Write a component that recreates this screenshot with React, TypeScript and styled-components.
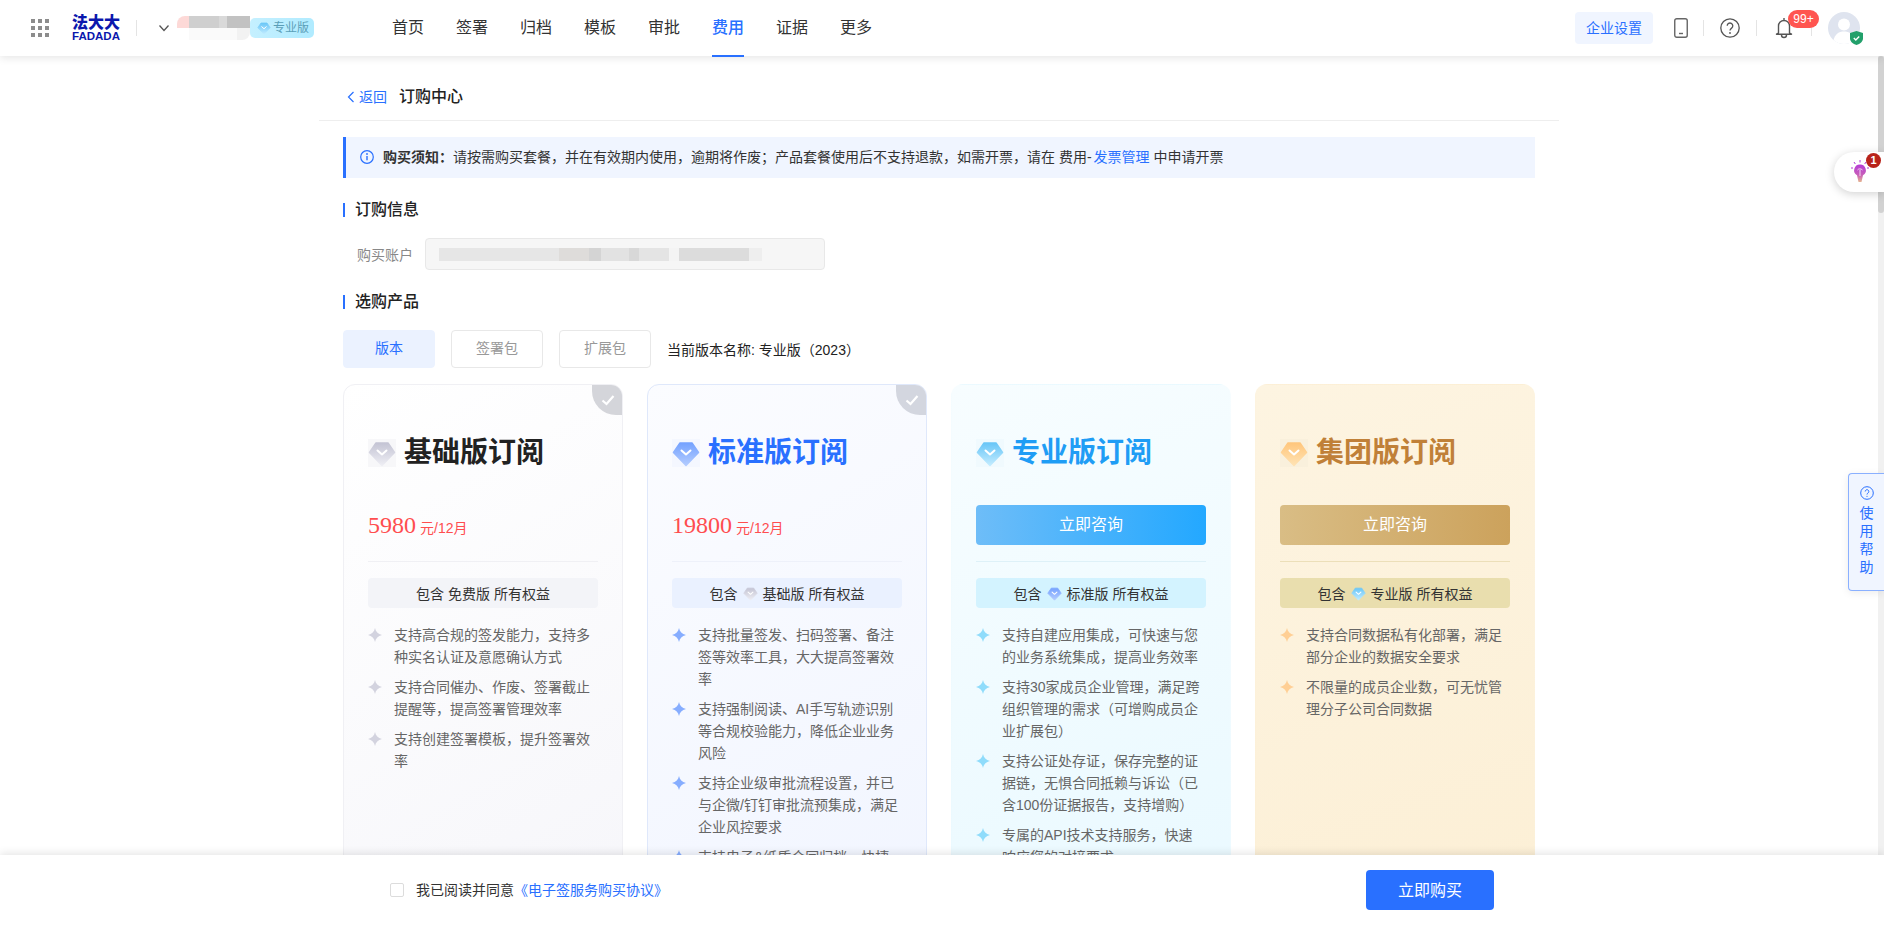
import React from 'react'
import styled, { createGlobalStyle } from 'styled-components'

const BLUE = '#2970ff'

type Tone = 'basic' | 'standard' | 'pro' | 'group'

const tones: Record<Tone, { title: string; bg: string; border: string; pill: string; rule: string; gemTop: string; gemBottom: string; gemBack: string; star: string; mark?: string; btn?: string }> = {
  basic: {
    title: '#222222',
    bg: 'linear-gradient(150deg, #ffffff 0%, #f6f6fa 100%)',
    border: '#f0f0f4',
    pill: '#f3f4f8',
    rule: '#f0f0f4',
    gemTop: '#c4c4d4',
    gemBottom: '#eeeef4',
    gemBack: '#f7f7f9',
    star: '#d3d3df',
    mark: '#d4d5da',
  },
  standard: {
    title: BLUE,
    bg: 'linear-gradient(150deg, #fbfcff 0%, #f1f5ff 100%)',
    border: '#dfe8fb',
    pill: '#eaf1ff',
    rule: '#eef1fa',
    gemTop: '#75a2ff',
    gemBottom: '#b3ccff',
    gemBack: '#f4f7ff',
    star: '#86adff',
    mark: '#d3d6df',
  },
  pro: {
    title: '#1f9df5',
    bg: 'linear-gradient(160deg, #f7fdff 0%, #e9f9ff 100%)',
    border: 'transparent',
    pill: '#d3f3ff',
    rule: '#def1f8',
    gemTop: '#69c6f7',
    gemBottom: '#c3ecff',
    gemBack: '#f0fafe',
    star: '#8fdcfb',
    btn: 'linear-gradient(90deg, #6ebdf8 0%, #23a8ff 100%)',
  },
  group: {
    title: '#c08038',
    bg: 'linear-gradient(160deg, #fdf4e1 0%, #fcefd5 100%)',
    border: 'transparent',
    pill: '#e9deae',
    rule: '#ecdfb9',
    gemTop: '#ffc67c',
    gemBottom: '#ffe3b4',
    gemBack: '#f9f0dc',
    star: '#ffcf94',
    btn: 'linear-gradient(90deg, #d9bd85 0%, #cca25c 100%)',
  },
}

const plans: { tone: Tone; name: string; price?: string; owned?: boolean; includes: string; includesTone?: Tone; items: string[] }[] = [
  {
    tone: 'basic',
    name: '基础版订阅',
    price: '5980',
    owned: true,
    includes: '免费版',
    items: [
      '支持高合规的签发能力\uff0c支持多种实名认证及意愿确认方式',
      '支持合同催办、作废、签署截止提醒等\uff0c提高签署管理效率',
      '支持创建签署模板\uff0c提升签署效率',
    ],
  },
  {
    tone: 'standard',
    name: '标准版订阅',
    price: '19800',
    owned: true,
    includes: '基础版',
    includesTone: 'basic',
    items: [
      '支持批量签发、扫码签署、备注签等效率工具\uff0c大大提高签署效率',
      '支持强制阅读、AI手写轨迹识别等合规校验能力\uff0c降低企业业务风险',
      '支持企业级审批流程设置\uff0c并已与企微/钉钉审批流预集成\uff0c满足企业风控要求',
      '支持电子&纸质合同归档\uff0c快捷管理合同档案',
    ],
  },
  {
    tone: 'pro',
    name: '专业版订阅',
    includes: '标准版',
    includesTone: 'standard',
    items: [
      '支持自建应用集成\uff0c可快速与您的业务系统集成\uff0c提高业务效率',
      '支持30家成员企业管理\uff0c满足跨组织管理的需求\uff08可增购成员企业扩展包\uff09',
      '支持公证处存证\uff0c保存完整的证据链\uff0c无惧合同抵赖与诉讼\uff08已含100份证据报告\uff0c支持增购\uff09',
      '专属的API技术支持服务\uff0c快速响应您的对接要求',
    ],
  },
  {
    tone: 'group',
    name: '集团版订阅',
    includes: '专业版',
    includesTone: 'pro',
    items: [
      '支持合同数据私有化部署\uff0c满足部分企业的数据安全要求',
      '不限量的成员企业数\uff0c可无忧管理分子公司合同数据',
    ],
  },
]

const navItems = ['首页', '签署', '归档', '模板', '审批', '费用', '证据', '更多']

const noticeLead = '购买须知\uff1a'
const noticeBody = '请按需购买套餐\uff0c并在有效期内使用\uff0c逾期将作废\uff1b产品套餐使用后不支持退款\uff0c如需开票\uff0c请在 费用-'
const currentPlan = '当前版本名称: 专业版\uff082023\uff09'

const GlobalStyle = createGlobalStyle`
  html, body {
    margin: 0;
    height: 100%;
    overflow: hidden;
    background: #fff;
    font-family: "Liberation Sans", "Noto Sans CJK SC", sans-serif;
    color: #333;
  }
  * { box-sizing: border-box; }
`

const Page = styled.div`
  position: relative;
  display: flex;
  flex-direction: column;
  height: 100vh;
`

const Header = styled.header`
  position: relative;
  z-index: 3;
  flex: none;
  display: flex;
  align-items: center;
  height: 56px;
  padding: 0 24px 0 31px;
  background: #fff;
  box-shadow: 0 2px 8px rgba(0, 0, 0, 0.1);
`

const AppGrid = styled.div`
  display: grid;
  grid-template-columns: repeat(3, 4px);
  gap: 3px;
  span {
    width: 4px;
    height: 4px;
    background: #8c8c8c;
  }
`

const Logo = styled.div`
  width: 48px;
  margin-left: 23px;
  color: #0b17ad;
  text-align: center;
  font-weight: 700;
  b {
    display: block;
    font-size: 16px;
    line-height: 15px;
  }
  i {
    display: block;
    font-style: normal;
    font-size: 11.5px;
    line-height: 11px;
    margin-top: 1px;
  }
`

const HeadRule = styled.div`
  width: 1px;
  height: 16px;
  margin: 0 16px;
  background: #e4e4e4;
`

const OrgChevron = styled.svg`
  margin-left: 5px;
  margin-right: 7px;
`

const OrgName = styled.div`
  width: 73px;
  height: 24px;
  border-radius: 8px 0 8px 0;
  background:
    linear-gradient(90deg, #fdd9d7 0 12px, #cfcfcf 12px 42px, #d9d9d9 42px 50px, #c2c2c2 50px 100%) top / 100% 12px no-repeat,
    linear-gradient(90deg, #ffffff 0 12px, #fafafa 12px 60px, #f2f2f2 60px 100%) bottom / 100% 12px no-repeat;
`

const PlanBadge = styled.div`
  display: flex;
  align-items: center;
  gap: 2px;
  width: 64px;
  height: 20px;
  padding-left: 7px;
  margin-right: 78px;
  border-radius: 5px;
  background: linear-gradient(90deg, #c5f0ff, #b0ebff);
  color: #5b9fb8;
  font-size: 12px;
  line-height: 20px;
  white-space: nowrap;
`

const Nav = styled.nav`
  display: flex;
  gap: 32px;
`

const NavItem = styled.a<{ $active?: boolean }>`
  position: relative;
  display: block;
  height: 56px;
  font-size: 16px;
  line-height: 55px;
  color: ${(p) => (p.$active ? BLUE : '#333')};
  font-weight: ${(p) => (p.$active ? 500 : 400)};
  &::after {
    content: '';
    display: ${(p) => (p.$active ? 'block' : 'none')};
    position: absolute;
    left: 0;
    right: 0;
    bottom: -1px;
    height: 2px;
    background: ${BLUE};
  }
`

const HeadTools = styled.div`
  display: flex;
  align-items: center;
  margin-left: auto;
`

const SettingsButton = styled.button`
  width: 78px;
  height: 32px;
  padding: 0 0 2px;
  border: 0;
  border-radius: 4px;
  background: #f0f5ff;
  color: ${BLUE};
  font: inherit;
  font-size: 14px;
`

const PhoneIcon = styled.svg`
  display: block;
  margin: 0 -1px 0 21px;
`

const ToolIcon = styled.svg`
  display: block;
  flex: none;
`

const BellSlot = styled.div`
  position: relative;
  width: 20px;
  height: 22px;
  margin-left: 2px;
`

const CountBadge = styled.span`
  position: absolute;
  left: 13px;
  top: -7px;
  width: 31px;
  height: 18px;
  border-radius: 9px;
  background: #ff5550;
  color: #fff;
  font-size: 12px;
  line-height: 18px;
  text-align: center;
`

const Avatar = styled.div`
  position: relative;
  width: 32px;
  height: 32px;
`

const AvatarShield = styled.svg`
  position: absolute;
  right: -3px;
  bottom: -1px;
`

const Body = styled.div`
  flex: 1;
  min-height: 0;
  display: flex;
`

const Scroller = styled.main`
  flex: 1;
  min-width: 0;
  overflow: hidden;
`

const Track = styled.div`
  flex: none;
  width: 6px;
  background: #f1f1f1;
`

const Thumb = styled.div`
  height: 157px;
  border-radius: 3px;
  background: #d2d2d2;
`

const Container = styled.div`
  width: 1240px;
  margin: 0 auto;
`

const Crumbs = styled.div`
  display: flex;
  align-items: center;
  height: 65px;
  padding: 18px 0 0 28px;
  border-bottom: 1px solid #eeeeee;
`

const BackLink = styled.a`
  display: flex;
  align-items: center;
  gap: 4px;
  color: ${BLUE};
  font-size: 14px;
  line-height: 22px;
`

const PageTitle = styled.h1`
  margin: 0 0 0 12px;
  font-size: 16px;
  line-height: 24px;
  font-weight: 500;
  color: #222;
`

const Content = styled.div`
  padding: 0 24px;
`

const Notice = styled.div`
  display: flex;
  align-items: center;
  gap: 9px;
  height: 41px;
  margin-top: 16px;
  padding: 0 0 3px 14px;
  border-left: 3px solid ${BLUE};
  background: #f0f5ff;
  font-size: 14px;
  color: #333;
  white-space: pre;
  svg {
    margin-top: 2px;
  }
  b {
    font-weight: 700;
  }
  a {
    margin-left: 2px;
    color: ${BLUE};
  }
`

const SectionTitle = styled.h2<{ $top: number }>`
  display: flex;
  align-items: center;
  gap: 10px;
  height: 22px;
  margin: ${(p) => p.$top}px 0 0;
  font-size: 16px;
  font-weight: 500;
  color: #222;
  &::before {
    content: '';
    width: 2px;
    height: 14px;
    margin-top: 4px;
    background: ${BLUE};
  }
`

const AccountRow = styled.div`
  display: flex;
  align-items: center;
  gap: 12px;
  margin-top: 19px;
  padding-left: 14px;
  font-size: 14px;
  color: #888;
`

const AccountBox = styled.div`
  display: flex;
  align-items: center;
  width: 400px;
  height: 32px;
  padding-left: 13px;
  border: 1px solid #e8e8e8;
  border-radius: 4px;
  background: #f6f6f6;
`

const Smudge = styled.div`
  width: 323px;
  height: 13px;
  background: linear-gradient(
    90deg,
    #e6e6e6 0 120px,
    #dedcda 120px 150px,
    #d4d4d4 150px 162px,
    #e2e2e2 162px 190px,
    #d8d8d8 190px 200px,
    #e4e4e4 200px 230px,
    #f4f4f4 230px 240px,
    #dcdcdc 240px 310px,
    #eeeeee 310px 100%
  );
`

const TabRow = styled.div`
  display: flex;
  align-items: center;
  gap: 16px;
  margin-top: 19px;
  font-size: 14px;
`

const Tab = styled.div<{ $active?: boolean }>`
  width: 92px;
  height: 38px;
  border: 1px solid ${(p) => (p.$active ? '#ebf2ff' : '#e8e8e8')};
  border-radius: 4px;
  background: ${(p) => (p.$active ? '#ebf2ff' : '#fff')};
  color: ${(p) => (p.$active ? BLUE : '#999')};
  line-height: 35px;
  text-align: center;
`

const CurrentPlan = styled.span`
  padding-bottom: 1px;
  color: #222;
`

const Plans = styled.div`
  display: grid;
  grid-template-columns: repeat(4, 280px);
  gap: 24px;
  margin-top: 16px;
`

const Card = styled.section<{ $tone: Tone }>`
  position: relative;
  overflow: hidden;
  padding: 54px 24px 40px;
  border: 1px solid ${(p) => tones[p.$tone].border};
  border-radius: 12px;
  background: ${(p) => tones[p.$tone].bg};
`

const OwnedMark = styled.div<{ $tone: Tone }>`
  position: absolute;
  top: -1px;
  right: -1px;
  display: flex;
  align-items: center;
  justify-content: center;
  width: 31px;
  height: 31px;
  border-bottom-left-radius: 24px;
  background: ${(p) => tones[p.$tone].mark};
`

const CardTitle = styled.h3<{ $tone: Tone }>`
  display: flex;
  align-items: center;
  gap: 8px;
  height: 28px;
  margin: 0;
  font-size: 28px;
  line-height: 28px;
  font-weight: 700;
  color: ${(p) => tones[p.$tone].title};
`

const Slot = styled.div`
  display: flex;
  align-items: center;
  height: 40px;
  margin-top: 38px;
`

const Price = styled.div`
  color: #ff4d4f;
  font-size: 14px;
  display: flex;
  align-items: baseline;
  b {
    margin-right: 4px;
    font-family: "Liberation Serif", serif;
    font-size: 24px;
    font-weight: 400;
  }
`

const ConsultButton = styled.button<{ $tone: Tone }>`
  width: 100%;
  height: 40px;
  padding: 0 0 4px;
  border: 0;
  border-radius: 4px;
  background: ${(p) => tones[p.$tone].btn};
  color: #fff;
  font: inherit;
  font-size: 16px;
`

const CardRule = styled.div<{ $tone: Tone }>`
  height: 1px;
  margin-top: 16px;
  background: ${(p) => tones[p.$tone].rule};
`

const IncludesPill = styled.div<{ $tone: Tone }>`
  display: flex;
  align-items: center;
  justify-content: center;
  height: 30px;
  margin-top: 16px;
  border-radius: 4px;
  background: ${(p) => tones[p.$tone].pill};
  font-size: 14px;
  color: #333;
  white-space: pre;
  svg {
    margin: 0 5px;
  }
`

const FeatureList = styled.ul`
  display: flex;
  flex-direction: column;
  gap: 8px;
  margin: 16px 0 0;
  padding: 0;
  list-style: none;
`

const Feature = styled.li`
  display: flex;
  gap: 12px;
  font-size: 14px;
  line-height: 22px;
  color: #666;
  svg {
    flex: none;
    margin-top: 4px;
  }
`

const Footer = styled.footer`
  position: relative;
  z-index: 2;
  flex: none;
  display: flex;
  align-items: center;
  height: 70px;
  padding: 0 390px;
  background: #fff;
  box-shadow: 0 -2px 8px rgba(0, 0, 0, 0.1);
  font-size: 14px;
  color: #333;
`

const Check = styled.span`
  width: 14px;
  height: 14px;
  margin-right: 12px;
  border: 1px solid #dcdcdc;
  border-radius: 2px;
  background: #fff;
`

const Agreement = styled.span`
  padding-bottom: 2px;
`

const AgreementLink = styled.a`
  color: ${BLUE};
`

const BuyButton = styled.button`
  width: 128px;
  height: 40px;
  margin-left: auto;
  padding: 0 0 2px;
  border: 0;
  border-radius: 4px;
  background: ${BLUE};
  color: #fff;
  font: inherit;
  font-size: 16px;
`

const BulbTab = styled.div`
  position: absolute;
  z-index: 4;
  top: 152px;
  right: 0;
  display: flex;
  align-items: center;
  width: 50px;
  height: 40px;
  padding-left: 17px;
  border-radius: 20px 0 0 20px;
  background: #fff;
  box-shadow: 0 2px 10px rgba(0, 0, 0, 0.18);
`

const BulbCount = styled.span`
  position: absolute;
  top: 1px;
  right: 3px;
  width: 15px;
  height: 15px;
  border-radius: 50%;
  background: #b8231a;
  color: #fff;
  font-size: 11px;
  font-weight: 700;
  line-height: 15px;
  text-align: center;
`

const HelpTab = styled.div`
  position: absolute;
  z-index: 4;
  top: 473px;
  right: 0;
  display: flex;
  flex-direction: column;
  align-items: center;
  width: 36px;
  height: 118px;
  padding-top: 12px;
  border: 1px solid #8ab0ff;
  border-right: 0;
  border-radius: 4px 0 0 4px;
  background: #f0f5ff;
  box-shadow: 0 2px 8px rgba(0, 0, 0, 0.08);
  color: ${BLUE};
  font-size: 14px;
  line-height: 18px;
  text-align: center;
  svg {
    margin-bottom: 4px;
  }
  span {
    display: block;
  }
`

const Gem = ({ tone, size, backed }: { tone: Tone; size: number; backed?: boolean }) => {
  const t = tones[tone]
  const id = `gem-${tone}`
  return (
    <svg width={size} height={size} viewBox="0 0 28 28" style={{ flex: 'none' }}>
      {backed && <rect width="28" height="28" fill={t.gemBack} />}
      <defs>
        <linearGradient id={id} x1="0" y1="0" x2="0" y2="1">
          <stop offset="0" stopColor={t.gemTop} />
          <stop offset="1" stopColor={t.gemBottom} />
        </linearGradient>
      </defs>
      <path d="M8 4h12l6.5 9.5L14 26.5 1.5 13.5Z" fill={`url(#${id})`} stroke={`url(#${id})`} strokeWidth="1.5" strokeLinejoin="round" />
      <path d="M9.5 11.5 14 15.5l4.5-4" fill="none" stroke="#fff" strokeWidth="2" strokeLinecap="round" strokeLinejoin="round" />
    </svg>
  )
}

const Star = ({ color }: { color: string }) => (
  <svg width="14" height="14" viewBox="0 0 14 14">
    <path d="M7 0C7.7 3.6 10 6.1 14 7 10 7.9 7.7 10.400 7 14 6.300 10.400 4 7.900 0 7 4 6.100 6.300 3.600 7 0Z" fill={color} />
  </svg>
)

export default function App() {
  return (
    <Page>
      <GlobalStyle />
      <Header>
        <AppGrid>
          {Array.from({ length: 9 }).map((_, i) => (
            <span key={i} />
          ))}
        </AppGrid>
        <Logo>
          <b>法大大</b>
          <i>FADADA</i>
        </Logo>
        <HeadRule />
        <OrgChevron width="12" height="12" viewBox="0 0 12 12">
          <path d="M1.5 3.5 6 8.5l4.5-5" fill="none" stroke="#555" strokeWidth="1.3" />
        </OrgChevron>
        <OrgName />
        <PlanBadge>
          <Gem tone="pro" size={14} />
          专业版
        </PlanBadge>
        <Nav>
          {navItems.map((item) => (
            <NavItem key={item} $active={item === '费用'}>
              {item}
            </NavItem>
          ))}
        </Nav>
        <HeadTools>
          <SettingsButton>企业设置</SettingsButton>
          <PhoneIcon width="14" height="20" viewBox="0 0 14 20">
            <rect x="0.75" y="0.75" width="12.5" height="18.5" rx="2" fill="none" stroke="#666" strokeWidth="1.4" />
            <path d="M5 15.5h4" stroke="#666" strokeWidth="1.4" />
          </PhoneIcon>
          <HeadRule />
          <ToolIcon width="20" height="20" viewBox="0 0 20 20">
            <circle cx="10" cy="10" r="9.2" fill="none" stroke="#555" strokeWidth="1.3" />
            <path d="M7.2 7.8a2.8 2.8 0 1 1 4.4 2.3c-1 .7-1.6 1.2-1.6 2.4" fill="none" stroke="#555" strokeWidth="1.3" />
            <circle cx="10" cy="15" r="0.9" fill="#555" />
          </ToolIcon>
          <HeadRule />
          <BellSlot>
            <ToolIcon width="18" height="22" viewBox="0 0 18 22">
              <path d="M9 1v2M3.5 16V9a5.5 5.5 0 0 1 11 0v7l2 1.2H1.5Z" fill="none" stroke="#555" strokeWidth="1.4" strokeLinejoin="round" />
              <path d="M6.5 18a2.5 2.5 0 0 0 5 0" fill="none" stroke="#555" strokeWidth="1.4" />
            </ToolIcon>
            <CountBadge>99+</CountBadge>
          </BellSlot>
          <HeadRule />
          <Avatar>
            <ToolIcon width="32" height="32" viewBox="0 0 32 32">
              <circle cx="16" cy="16" r="16" fill="#dfe4ef" />
              <circle cx="16" cy="12.5" r="6" fill="#fff" />
              <path d="M5.5 28c1.5-6 5.5-8.5 10.5-8.5s9 2.5 10.5 8.5a16 16 0 0 1-21 0Z" fill="#fff" />
            </ToolIcon>
            <AvatarShield width="13" height="14" viewBox="0 0 13 14">
              <path d="M6.5 0 13 2v5.5c0 3-2.8 5.3-6.5 6.5C2.8 12.8 0 10.5 0 7.5V2Z" fill="#22a06b" />
              <path d="M3.8 7 5.8 9l3.4-3.6" fill="none" stroke="#fff" strokeWidth="1.4" />
            </AvatarShield>
          </Avatar>
        </HeadTools>
      </Header>

      <Body>
        <Scroller>
          <Container>
            <Crumbs>
              <BackLink>
                <svg width="8" height="12" viewBox="0 0 8 12">
                  <path d="M6.5 1 1.5 6l5 5" fill="none" stroke={BLUE} strokeWidth="1.2" />
                </svg>
                返回
              </BackLink>
              <PageTitle>订购中心</PageTitle>
            </Crumbs>
            <Content>
              <Notice>
                <svg width="14" height="14" viewBox="0 0 14 14">
                  <circle cx="7" cy="7" r="6.3" fill="none" stroke={BLUE} strokeWidth="1.2" />
                  <path d="M7 6v4.2" stroke={BLUE} strokeWidth="1.4" />
                  <circle cx="7" cy="4" r="0.9" fill={BLUE} />
                </svg>
                <span>
                  <b>{noticeLead}</b>
                  {noticeBody}
                  <a>发票管理</a> 中申请开票
                </span>
              </Notice>

              <SectionTitle $top={19}>订购信息</SectionTitle>
              <AccountRow>
                购买账户
                <AccountBox>
                  <Smudge />
                </AccountBox>
              </AccountRow>

              <SectionTitle $top={19}>选购产品</SectionTitle>
              <TabRow>
                <Tab $active>版本</Tab>
                <Tab>签署包</Tab>
                <Tab>扩展包</Tab>
                <CurrentPlan>{currentPlan}</CurrentPlan>
              </TabRow>

              <Plans>
                {plans.map((plan) => (
                  <Card key={plan.tone} $tone={plan.tone}>
                    {plan.owned && (
                      <OwnedMark $tone={plan.tone}>
                        <svg width="14" height="12" viewBox="0 0 14 12">
                          <path d="M1.5 6.5 5.5 10l7-8" fill="none" stroke="#fff" strokeWidth="2.2" />
                        </svg>
                      </OwnedMark>
                    )}
                    <CardTitle $tone={plan.tone}>
                      <Gem tone={plan.tone} size={28} backed />
                      {plan.name}
                    </CardTitle>
                    <Slot>
                      {plan.price ? (
                        <Price>
                          <b>{plan.price}</b>元/12月
                        </Price>
                      ) : (
                        <ConsultButton $tone={plan.tone}>立即咨询</ConsultButton>
                      )}
                    </Slot>
                    <CardRule $tone={plan.tone} />
                    <IncludesPill $tone={plan.tone}>
                      包含
                      {plan.includesTone ? <Gem tone={plan.includesTone} size={15} /> : ' '}
                      {plan.includes} 所有权益
                    </IncludesPill>
                    <FeatureList>
                      {plan.items.map((item) => (
                        <Feature key={item}>
                          <Star color={tones[plan.tone].star} />
                          <span>{item}</span>
                        </Feature>
                      ))}
                    </FeatureList>
                  </Card>
                ))}
              </Plans>
            </Content>
          </Container>
        </Scroller>
        <Track>
          <Thumb />
        </Track>
      </Body>

      <Footer>
        <Check />
        <Agreement>
          我已阅读并同意
          <AgreementLink>《电子签服务购买协议》</AgreementLink>
        </Agreement>
        <BuyButton>立即购买</BuyButton>
      </Footer>

      <BulbTab>
        <svg width="18" height="24" viewBox="0 0 18 24">
          <defs>
            <linearGradient id="bulb" x1="0" y1="0" x2="0" y2="1">
              <stop offset="0" stopColor="#b53bd6" />
              <stop offset="0.6" stopColor="#c860b8" />
              <stop offset="1" stopColor="#e6b690" />
            </linearGradient>
          </defs>
          <path d="M9 4.5a5.8 5.8 0 0 0-3 10.8l1.5 6.7h3l1.5-6.7A5.8 5.8 0 0 0 9 4.5Z" fill="url(#bulb)" />
          <path d="M9 0v2.5M3 2l1.3 2M15 2l-1.3 2M0 8h2M16 8h2" stroke="#b53bd6" strokeWidth="1" />
          <path d="M6.5 10c1-1.5 3.5-1.5 5 0M9 10v6" fill="none" stroke="#f2d8f0" strokeWidth="1" />
        </svg>
        <BulbCount>1</BulbCount>
      </BulbTab>

      <HelpTab>
        <svg width="14" height="14" viewBox="0 0 14 14">
          <circle cx="7" cy="7" r="6.3" fill="none" stroke={BLUE} strokeWidth="1" />
          <path d="M5.2 5.5a1.8 1.8 0 1 1 2.8 1.5c-.6.4-1 .8-1 1.5" fill="none" stroke={BLUE} strokeWidth="1" />
          <circle cx="7" cy="10.3" r="0.6" fill={BLUE} />
        </svg>
        <span>使</span>
        <span>用</span>
        <span>帮</span>
        <span>助</span>
      </HelpTab>
    </Page>
  )
}
